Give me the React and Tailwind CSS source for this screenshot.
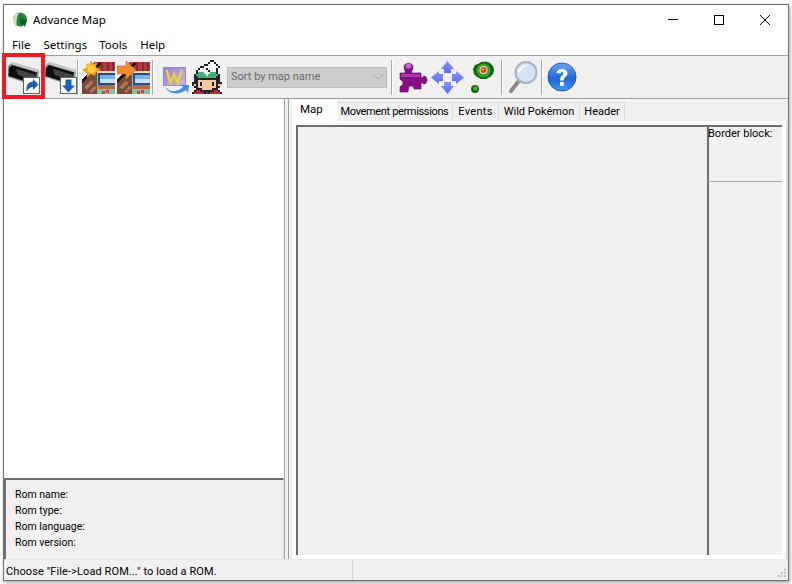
const trainer = [
  '.........kk....',
  '........kwwk...',
  '......kkwwwwk..',
  '....kkwwwwwwwk.',
  '...kwwwkwwwwk..',
  '..kwwwwwkwwwk..',
  '..kgggwwwgggk..',
  '.kgggggwgggggk.',
  '.kkgggggggggkk.',
  '.kkkkkkkkkkkkk.',
  '.kkssssssssskk.',
  'kkkskssssskskkk',
  'kskskssssskskss',
  '.kkssssssssskk.',
  '..kkkssssskkk..',
  '.krrkkkkkkkrrk.',
  'krrrrrkbkrrrrrk',
];

const colors = { k: '#23222e', w: '#f2f4f6', g: '#48b070', s: '#f4c8a4', r: '#b02c30', b: '#34508c' };

function Trainer() {
  return (
    <svg width="30" height="34" viewBox="0 0 15 17" shapeRendering="crispEdges">
      {trainer.map((row, y) =>
        row.split('').map((c, x) => (c === '.' ? null : <rect key={x + '-' + y} x={x} y={y} width="1" height="1" fill={colors[c]} />))
      )}
    </svg>
  );
}

function FilmIcon({ badge }) {
  return (
    <svg width="33" height="33" viewBox="0 0 33 33">
      <path d="M0 5 L4 1 L31 9 L30 21 L27 25 L0 16 Z" fill="#979797" />
      <path d="M4 1 L31 9 L30 11 L3 3 Z" fill="#c8c8c8" />
      <path d="M1 7 L4 4 L29 11.500 L27 23.500 L0.500 15 Z" fill="#0e0e0e" />
      <path d="M8 8 L28 14 L27 20 L10 14 Z" fill="#454545" />
      <rect x="15.500" y="16.500" width="16" height="16" fill="#fff" stroke="#56646f" />
      {badge === 'shortcut' ? (
        <path d="M18.500 30.500 C17.500 24 21 20.500 25 20.500 L25 18 L30.500 23.500 L25 29 L25 26 C22.500 26 20.500 27.500 18.500 30.500 Z" fill="#1b5fae" />
      ) : (
        <path d="M20.500 18.500 H26.500 V24.500 H30 L23.500 31.500 L17 24.500 H20.500 Z" fill="#1b5fae" />
      )}
    </svg>
  );
}

function HouseIcon({ children }) {
  return (
    <svg width="33" height="34" viewBox="0 0 33 34" shapeRendering="crispEdges">
      <rect x="13" y="8" width="20" height="26" fill="#7cc8a0" />
      <path d="M12 2 H33 V11 H6 Z" fill="#b23a3a" />
      <path d="M19 2h2v9h-2zM25 2h2v9h-2zM30 2h2v9h-2z" fill="#842a2a" />
      <rect x="15" y="11" width="18" height="2" fill="#e8dcc0" />
      <rect x="16" y="13" width="17" height="12" fill="#2c4a80" />
      <rect x="18" y="15" width="15" height="8" fill="#7cb4e8" />
      <rect x="18" y="19" width="15" height="4" fill="#c8e0f4" />
      <rect x="16" y="25" width="17" height="4" fill="#b86c40" />
      <path d="M20 31h3v3h-3zM24 30h3v3h-3z" fill="#d83a4a" />
      <path d="M0 20 L13 8 L15 10 L15 34 L0 34 Z" fill="#7c4a3a" />
      <path d="M0 19 L17 2 L19 4 L0 23 Z" fill="#1c1418" />
      <path d="M2 27 L9 20 L11 23 L5 30 Z M7 32 L13 25 L14 28 L10 33 Z" fill="#a87a5a" />
      <g shapeRendering="auto">{children}</g>
    </svg>
  );
}

function WIcon() {
  return (
    <svg width="27" height="27" viewBox="0 0 27 27">
      <defs>
        <linearGradient id="wbg" x1="0" y1="0" x2="1" y2="1">
          <stop offset="0" stopColor="#9a78d0" />
          <stop offset="1" stopColor="#c9b8e8" />
        </linearGradient>
      </defs>
      <rect x="0.500" y="0.500" width="22" height="18" fill="url(#wbg)" stroke="#9a86c0" />
      <path d="M3.500 3 L7.500 16 L11 7 L14.500 16 L19 3" fill="none" stroke="#e8d040" strokeWidth="2.600" />
      <path d="M2 20 C8 26 15 25 20 20 L18 18 L26 18 L25 26 L23 23 C16 28 7 28 2 20 Z" fill="#3f8fe0" />
    </svg>
  );
}

function Puzzle() {
  return (
    <svg width="30" height="32" viewBox="0 0 30 32">
      <path d="M2 12 H7 C8 10 6 9 6 6 C6 1 15 1 15 6 C15 9 13 10 14 12 H23 V16 C24 18 25 15 26 15 C30 15 30 23 26 23 C25 23 24 21 23 22 V28 H16 C15 26 16 25 13 25 C10 25 11 27 10 31 H2 V26 C3 24 5 25 5 22 C5 19 3 20 2 18 Z" fill="#880e88" stroke="#5e0a5e" strokeWidth="0.600" />
      <path d="M3 13 H22 V16 H3 Z" fill="#a838a8" />
      <ellipse cx="10.500" cy="5" rx="3" ry="2.500" fill="#c070c0" />
    </svg>
  );
}

function Arrows() {
  return (
    <svg width="33" height="33" viewBox="0 0 33 33">
      <defs>
        <linearGradient id="arr" x1="0" y1="0" x2="0" y2="1">
          <stop offset="0" stopColor="#8a96f4" />
          <stop offset="1" stopColor="#5c6cf0" />
        </linearGradient>
      </defs>
      <path d="M16.500 0 L23 8 H20 V12 H13 V8 H10 Z" fill="url(#arr)" />
      <path d="M16.500 33 L23 25 H20 V21 H13 V25 H10 Z" fill="url(#arr)" />
      <path d="M0 16.500 L8 10 V13 H12 V20 H8 V23 Z" fill="url(#arr)" />
      <path d="M33 16.500 L25 10 V13 H21 V20 H25 V23 Z" fill="url(#arr)" />
    </svg>
  );
}

function GreenDot() {
  return (
    <svg width="26" height="33" viewBox="0 0 26 33">
      <path d="M10 1 L15 0.500 L19 2 L22 5 L23 9 L22 13 L19 16 L15 18 L10 18 L6 16 L3 13 L2 8 L4 4 L7 3 Z" fill="#0c660c" />
      <circle cx="12.500" cy="9.500" r="7" fill="#3ca024" />
      <circle cx="12.500" cy="9" r="4" fill="#f0e8dc" />
      <circle cx="12.500" cy="9" r="3" fill="#e0341c" />
      <circle cx="12" cy="8.500" r="1.100" fill="#ffd870" />
      <circle cx="4" cy="28" r="4" fill="#0f6e0f" />
      <circle cx="4.500" cy="27.500" r="2" fill="#58b030" />
    </svg>
  );
}

function Magnifier() {
  return (
    <svg width="30" height="33" viewBox="0 0 30 33">
      <path d="M10 21 L3 30" stroke="#8a8a8a" strokeWidth="4" strokeLinecap="round" />
      <circle cx="18" cy="11.500" r="10.500" fill="#d4e4f4" stroke="#a8b2bc" strokeWidth="2" />
      <path d="M10 13 C10 7 14 4 20 4 C15 6 12 9 10 13 Z" fill="#fff" />
    </svg>
  );
}

function HelpIcon() {
  return (
    <svg width="30" height="30" viewBox="0 0 30 30">
      <defs>
        <linearGradient id="hb" x1="0" y1="0" x2="0" y2="1">
          <stop offset="0" stopColor="#6fa8f0" />
          <stop offset="0.550" stopColor="#1f66d8" />
          <stop offset="1" stopColor="#3f9cf0" />
        </linearGradient>
      </defs>
      <circle cx="15" cy="15" r="14" fill="url(#hb)" stroke="#2f55a8" />
      <path d="M9.500 11 C10 6 20 5.500 20.500 11 C20.500 15 16.500 15 16.500 18.500 H13 C13 13.500 16.500 13.500 16.500 11 C16.500 9.500 13.500 9.500 13.500 11.500 Z" fill="#fff" />
      <rect x="13" y="20" width="3.800" height="3.800" fill="#fff" />
    </svg>
  );
}

function Sep({ className }) {
  return <div className={'w-[2px] h-[35px] bg-[#a8a8a8] border-r border-white shrink-0 ' + className} />;
}

const tabs = [
  { label: 'Movement permissions', w: 'w-[116px] tracking-[-0.35px]' },
  { label: 'Events', w: 'w-[46px] tracking-[0.3px]' },
  { label: 'Wild Pokémon', w: 'w-[81px]' },
  { label: 'Header', w: 'w-[45px]' },
];

export default function App() {
  return (
    <div className="w-[792px] h-[584px] bg-white pl-[3px] pt-[4px] overflow-hidden font-['Noto_Sans',sans-serif] text-[11.5px] text-black">
      <div className="w-[786px] h-[577px] border border-[#6f6f6f] bg-[#f0f0f0] flex flex-col shadow-[1px_2px_4px_rgba(0,0,0,0.35)] relative">
        {/* title bar */}
        <div className="h-[31px] bg-white flex items-center shrink-0 pb-[2px]">
          <svg className="ml-[8px]" width="16" height="16" viewBox="0 0 16 16">
            <circle cx="8" cy="7.500" r="7" fill="#1d8a3a" />
            <path d="M1 8 C1 3 4 1 7 1 C5 4 4 9 5 15 C3 14 1 11 1 8 Z" fill="#d8d8c8" />
            <path d="M8 6 L15 8 L13 15 L11 12 L9 15 Z" fill="#0d5a28" />
          </svg>
          <span className="ml-[5px]">Advance Map</span>
          <div className="ml-auto flex items-center h-full">
            <div className="w-[46px] flex justify-center">
              <div className="w-[10px] h-px bg-black" />
            </div>
            <div className="w-[46px] flex justify-center">
              <div className="w-[10px] h-[10px] border border-black" />
            </div>
            <div className="w-[46px] flex justify-center">
              <svg width="10" height="10" viewBox="0 0 10 10">
                <path d="M0 0 L10 10 M10 0 L0 10" stroke="#000" strokeWidth="1" />
              </svg>
            </div>
          </div>
        </div>
        {/* menu */}
        <div className="h-[19px] bg-white flex items-center pl-[8px] pb-px gap-[13px] shrink-0">
          <span>File</span>
          <span className="-mr-px">Settings</span>
          <span>Tools</span>
          <span>Help</span>
        </div>
        <div className="h-px bg-[#a0a0a0] shrink-0" />
        {/* toolbar */}
        <div className="h-[43px] flex items-center shrink-0 border-b border-[#a0a0a0]">
          <div className="ml-[4px] w-[37px]"><FilmIcon badge="shortcut" /></div>
          <div className="w-[32px]"><FilmIcon badge="down" /></div>
          <Sep className="ml-[0px]" />
          <div className="ml-[3px]">
            <HouseIcon>
              <path d="M9 0 L11 4 L15 3 L14 7 L19 10 L14 12 L13 16 L9 14 L5 18 L5 13 L0 10 L5 7 L4 3 L7 5 Z" fill="#f5a020" />
              <circle cx="9.500" cy="9" r="4" fill="#ffd030" />
            </HouseIcon>
          </div>
          <div className="ml-[2px]">
            <HouseIcon>
              <path d="M0 6 H9 V1 L19 10 L9 19 V14 H0 Z" fill="#f28c30" stroke="#c86a18" strokeWidth="0.600" />
            </HouseIcon>
          </div>
          <Sep className="ml-[2px]" />
          <div className="ml-[9px] self-end mb-[4px]"><WIcon /></div>
          <div className="ml-[2px]"><Trainer /></div>
          <div className="ml-[5px] w-[160px] h-[21px] bg-[#cccccc] border border-[#bcbcbc] flex items-center pl-[3px] shrink-0">
            <span className="text-[#6d6d6d] font-['Roboto',sans-serif] text-[11px]">Sort by map name</span>
            <svg className="ml-auto mr-[2px]" width="12" height="8" viewBox="0 0 12 8">
              <path d="M1 1 L6 6 L11 1" fill="none" stroke="#a8a8a8" strokeWidth="1" />
            </svg>
          </div>
          <Sep className="ml-[4px]" />
          <div className="ml-[5px]"><Puzzle /></div>
          <div className="ml-[3px]"><Arrows /></div>
          <div className="ml-[7px]"><GreenDot /></div>
          <Sep className="ml-[4px]" />
          <div className="ml-[5px]"><Magnifier /></div>
          <Sep className="ml-[3px]" />
          <div className="ml-[4px]"><HelpIcon /></div>
        </div>
        {/* body */}
        <div className="flex-1 flex min-h-0 font-['Roboto',sans-serif] text-[11px]">
          <div className="w-[280px] flex flex-col shrink-0">
            <div className="flex-1 bg-white" />
            <div className="h-[81px] bg-[#f0f0f0] border-l-2 border-t-2 border-[#6e6e6e] border-r border-r-[#e0e0e0] pl-[9px] pt-[7px] leading-[16px] text-[10.5px]">
              <div>Rom name:</div>
              <div>Rom type:</div>
              <div>Rom language:</div>
              <div>Rom version:</div>
            </div>
          </div>
          <div className="w-[5px] border-x border-[#a0a0a0] shrink-0" />
          <div className="w-[3px] shrink-0" />
          <div className="flex-1 flex flex-col">
            <div className="h-[21px] flex items-end shrink-0 mt-[1px]">
              <div className="w-[45px] h-[21px] bg-white pl-[8px] pt-px text-[11.5px]">Map</div>
              {tabs.map((t) => (
                <div key={t.label} className={t.w + ' h-[19px] border-t border-r border-[#dcdcdc] flex items-center justify-center whitespace-nowrap'}>
                  {t.label}
                </div>
              ))}
            </div>
            <div className="h-[438px] w-[494px] bg-[#f0f0f0] border-[4px] border-white flex shadow-[0_1px_0_#d0d0d0,1px_0_0_#d0d0d0]">
              <div className="w-[411px] border-l-2 border-t-2 border-[#6e6e6e] bg-[#f0f0f0] shrink-0" />
              <div className="flex-1 border-l-2 border-t-2 border-[#6e6e6e] flex flex-col leading-[14px]">
                <div className="h-[55px] border-b border-[#a8a8a8] -ml-px">Border block:</div>
              </div>
            </div>
          </div>
        </div>
        {/* status bar */}
        <div className="h-[21px] flex items-center shrink-0 font-['Roboto',sans-serif] text-[11px] border-t border-[#e8e8e8]">
          <div className="w-[349px] h-full flex items-center pl-[2px] pt-[4px] tracking-[0.1px] border-r border-[#d0d0d0]">
            Choose "File-&gt;Load ROM..." to load a ROM.
          </div>
          <svg className="ml-auto mr-[1px] self-end mb-[2px]" width="9" height="9" viewBox="0 0 9 9" shapeRendering="crispEdges">
            <path d="M6 0h2v2H6zM3 3h2v2H3zM6 3h2v2H6zM0 6h2v2H0zM3 6h2v2H3zM6 6h2v2H6z" fill="#c4c4c4" />
          </svg>
        </div>
        {/* red highlight drawn over the first button */}
        <div className="absolute left-[-2px] top-[48px] w-[43px] h-[46px] border-[4px] border-[#ed1c24]" />
      </div>
    </div>
  );
}
